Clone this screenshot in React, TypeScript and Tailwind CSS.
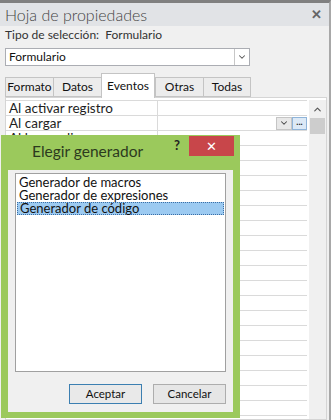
import { ChevronDown, ChevronUp } from 'lucide-react';

// Hoja de propiedades + diálogo "Elegir generador"

const TABS = ['Formato', 'Datos', 'Eventos', 'Otras', 'Todas'];

const ROWS = [
  'Al activar registro',
  'Al cargar',
  'Al hacer clic',
  '', '', '', '', '', '', '', '', '', '', '', '', '', '', '', '', '', '',
];

const font = { fontFamily: 'Lato, "Open Sans", sans-serif' };

function PropertyGrid() {
  return (
    <div className="flex-1 flex bg-white border border-[#d5d5d5] ml-[5px] mr-[2px] pt-[2px] overflow-hidden">
      <div className="flex-1 flex flex-col border-t border-[#dadada]">
        {ROWS.map((label, i) => (
          <div key={i} className="flex h-[15px] shrink-0 border-b border-[#dadada]">
            <div className="w-[152px] border-r border-[#dadada] pl-[3px] text-[13.5px] leading-[14px] text-[#1e1e1e] truncate">
              {label}
            </div>
            <div className="flex-1 flex justify-end items-center">
              {i === 1 && (
                <>
                  <div className="w-[16px] h-[13px] border border-[#c5c5c5] bg-[#e8e8e8] flex items-center justify-center">
                    <ChevronDown size={10} strokeWidth={2.5} className="text-[#444]" />
                  </div>
                  <div className="w-[15px] h-[13px] border border-[#8fb4d9] bg-[#dce9f6] flex items-center justify-center text-[9px] font-bold leading-none text-[#222] pb-[3px]">
                    ...
                  </div>
                </>
              )}
            </div>
          </div>
        ))}
      </div>
      <div className="w-[17px] ml-[2px] bg-[#f0f0f0] flex flex-col items-center">
        <ChevronUp size={11} strokeWidth={2.5} className="text-[#555] mt-[4px]" />
        <div className="w-[15px] h-[16px] bg-[#cdcdcd] mt-[3px]" />
      </div>
    </div>
  );
}

function BuilderDialog() {
  return (
    <div
      className="absolute left-[1px] top-[132px] w-[239px] h-[283px] bg-[#9bc95c] flex flex-col px-[7px] pb-[6px]"
      style={font}
    >
      <div className="h-[35px] flex items-start relative">
        <span className="pl-[24px] pt-[5px] text-[15.5px] leading-[22px] text-[#2c3a1e]">Elegir generador</span>
        <span className="absolute left-[166px] top-[1px] text-[13px] font-bold text-[#222]">?</span>
        <div className="absolute left-[181px] top-[1px] w-[45px] h-[20px] bg-[#c8464a] flex items-center justify-center text-white text-[13px] leading-none">
          ✕
        </div>
      </div>
      <div className="flex-1 bg-[#f0f0f0] flex flex-col px-[7px] pt-[3px]">
        <div className="h-[199px] bg-white border border-[#a0a0a0] pt-[2px] px-[1px] text-[13px] leading-[13px] text-[#111]">
          <div className="pl-[2px]">Generador de macros</div>
          <div className="pl-[2px]">Generador de expresiones</div>
          <div className="pl-[2px] bg-[#9ccaf1] border border-dotted border-[#3a6ea5] leading-[11px] h-[13px]">
            Generador de código
          </div>
        </div>
        <div className="flex justify-end gap-[11px] mt-[12px]">
          <div className="w-[73px] h-[20px] border border-[#3c7fb1] bg-[#e9e9e9] flex items-center justify-center text-[11.5px] text-[#111]">
            Aceptar
          </div>
          <div className="w-[73px] h-[20px] border border-[#adadad] bg-[#e6e6e6] flex items-center justify-center text-[11.5px] text-[#111]">
            Cancelar
          </div>
        </div>
      </div>
    </div>
  );
}

export default function App() {
  return (
    <div className="relative w-[331px] h-[420px] overflow-hidden bg-[#f0f0f0] flex flex-col border-t-[3px] border-t-[#808080] border-r-[2px] border-r-[#a8a8a8]" style={font}>
      {/* Title */}
      <div className="h-[23px] shrink-0 bg-[#e1e3e6] flex items-center justify-between pl-[5px] pr-[7px]">
        <span className="text-[16px] font-light leading-[22px] text-[#444]">Hoja de propiedades</span>
        <span className="text-[13px] font-bold text-[#666]">✕</span>
      </div>

      <div className="pl-[5px] pt-[1px] h-[22px] text-[12px] leading-[16px] text-[#333]">
        Tipo de selección:&nbsp; Formulario
      </div>

      {/* Selector */}
      <div className="ml-[5px] w-[245px] h-[18px] bg-white border border-[#abadb3] flex items-center justify-between">
        <span className="pl-[3px] text-[12px] leading-[16px] text-[#111]">Formulario</span>
        <div className="w-[15px] h-[16px] border-l border-[#c7c7c7] flex items-center justify-center">
          <ChevronDown size={10} strokeWidth={2.5} className="text-[#555]" />
        </div>
      </div>

      {/* Tabs */}
      <div className="flex items-end ml-[5px] mt-[6px] h-[25px]">
        {TABS.map((t) => {
          const active = t === 'Eventos';
          return (
            <div
              key={t}
              className={
                active
                  ? 'h-[25px] w-[54px] bg-white border border-b-0 border-[#c4c4c4] flex items-start justify-center pt-[3px] text-[12px] text-[#111] -mb-[1px] relative z-10'
                  : 'h-[20px] w-[48px] bg-[#ececec] border border-[#c4c4c4] border-r-0 last:border-r flex items-center justify-center text-[12px] text-[#111]'
              }
            >
              {t}
            </div>
          );
        })}
      </div>

      <PropertyGrid />
      <BuilderDialog />
    </div>
  );
}
